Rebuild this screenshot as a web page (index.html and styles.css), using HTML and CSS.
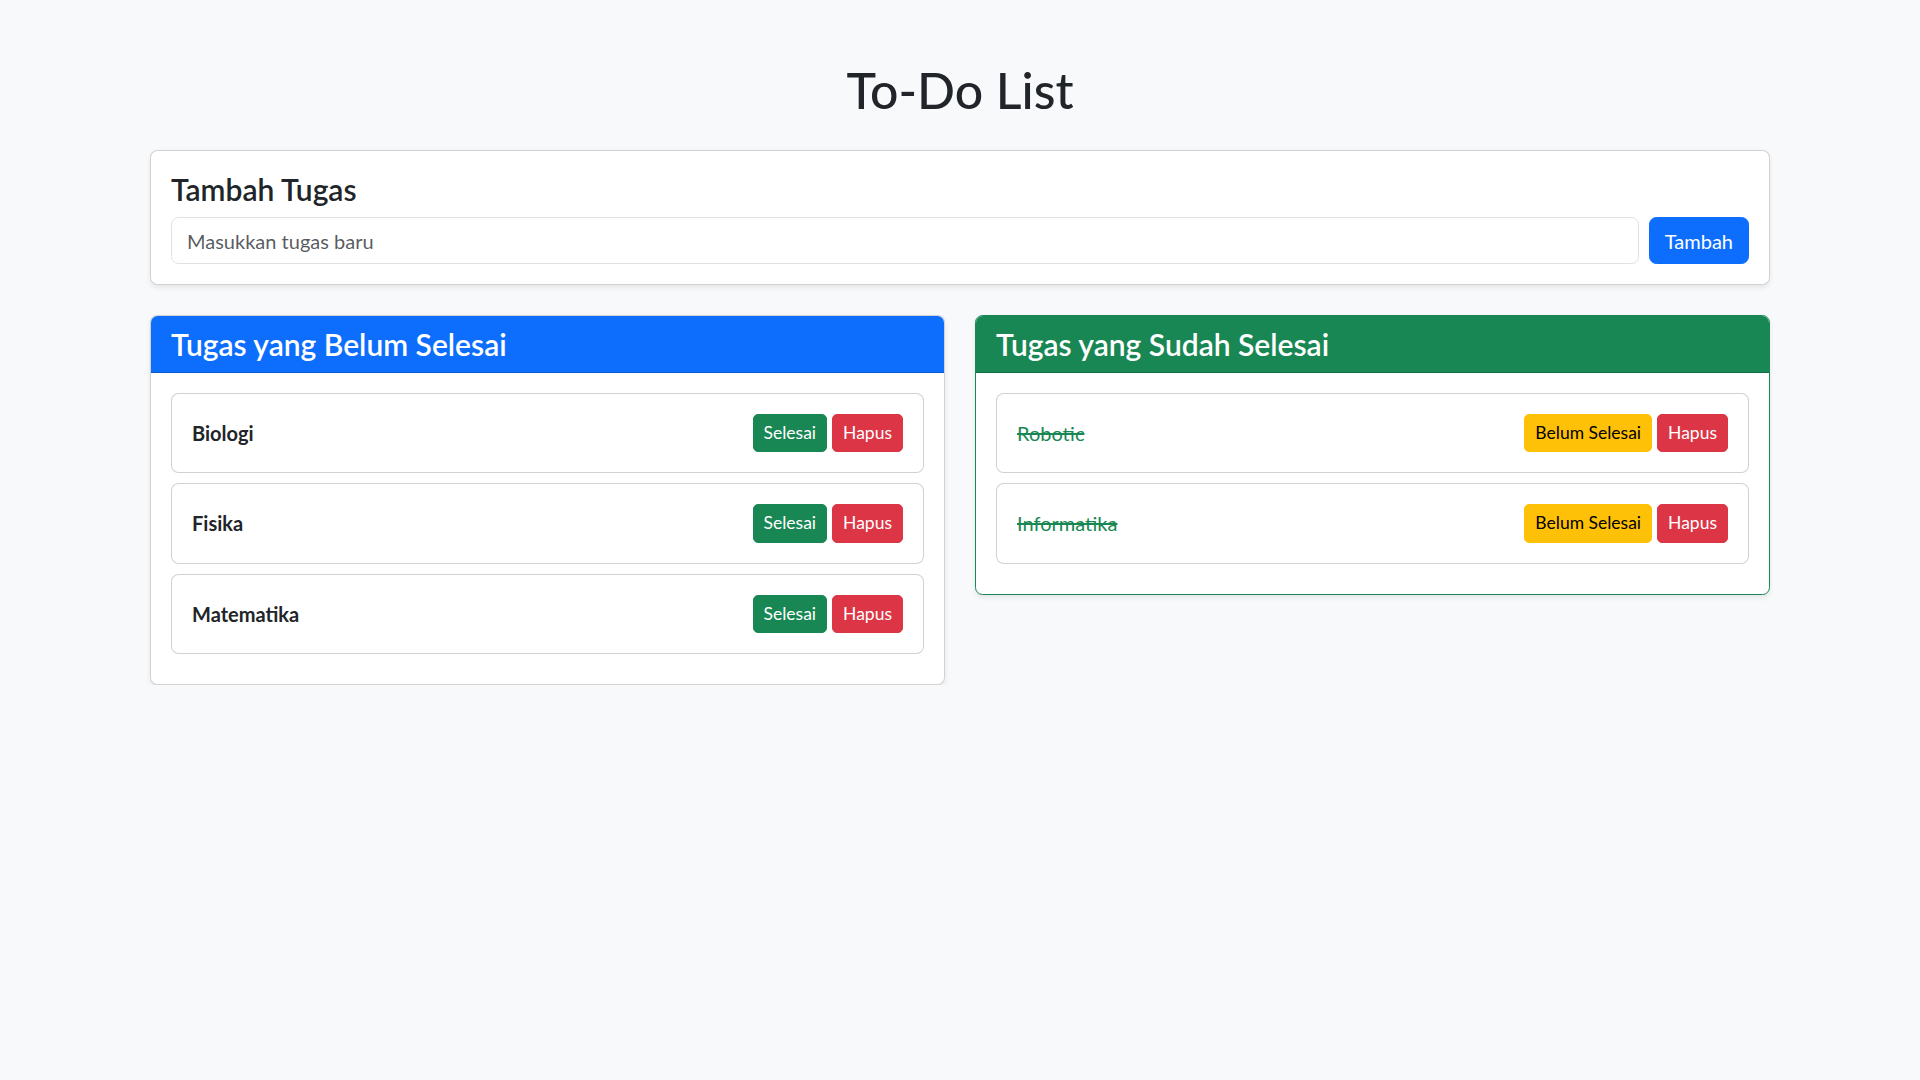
FILE: index.html
```html
<!DOCTYPE html>
<html lang="id">
<head>
<meta charset="utf-8">
<title>To-Do List</title>
<link rel="stylesheet" href="styles.css">
</head>
<body>
<div class="container">
  <h1 class="title">To-Do List</h1>

  <div class="card add-card">
    <div class="card-body">
      <h4 class="card-title">Tambah Tugas</h4>
      <form class="add-form">
        <input class="form-control" type="text" placeholder="Masukkan tugas baru">
        <button type="button" class="btn btn-primary">Tambah</button>
      </form>
    </div>
  </div>

  <div class="row">
    <div class="card">
      <div class="card-header header-primary">
        <h4 class="header-title">Tugas yang Belum Selesai</h4>
      </div>
      <div class="card-body">
        <div class="task">
          <span class="task-name">Biologi</span>
          <div class="actions">
            <button class="btn btn-sm btn-success">Selesai</button>
            <button class="btn btn-sm btn-danger">Hapus</button>
          </div>
        </div>
        <div class="task">
          <span class="task-name">Fisika</span>
          <div class="actions">
            <button class="btn btn-sm btn-success">Selesai</button>
            <button class="btn btn-sm btn-danger">Hapus</button>
          </div>
        </div>
        <div class="task">
          <span class="task-name">Matematika</span>
          <div class="actions">
            <button class="btn btn-sm btn-success">Selesai</button>
            <button class="btn btn-sm btn-danger">Hapus</button>
          </div>
        </div>
      </div>
    </div>

    <div class="card card-done">
      <div class="card-header header-success">
        <h4 class="header-title">Tugas yang Sudah Selesai</h4>
      </div>
      <div class="card-body">
        <div class="task">
          <span class="task-done">Robotic</span>
          <div class="actions">
            <button class="btn btn-sm btn-warning">Belum Selesai</button>
            <button class="btn btn-sm btn-danger">Hapus</button>
          </div>
        </div>
        <div class="task">
          <span class="task-done">Informatika</span>
          <div class="actions">
            <button class="btn btn-sm btn-warning">Belum Selesai</button>
            <button class="btn btn-sm btn-danger">Hapus</button>
          </div>
        </div>
      </div>
    </div>
  </div>
</div>
</body>
</html>
```
FILE: styles.css
```css
* { box-sizing: border-box; }

body {
  margin: 0;
  background: #f8f9fa;
  color: #212529;
  font-family: Lato, "Noto Sans", sans-serif;
  font-size: 20px;
  line-height: 1.5;
}

.container {
  width: 1620px;
  margin: 60px auto 0;
}

.title {
  margin: 0 0 30px;
  font-size: 50px;
  font-weight: 500;
  line-height: 1.2;
  text-align: center;
}

.card {
  background: #fff;
  border: 1px solid rgba(0, 0, 0, 0.175);
  border-radius: 7.5px;
  box-shadow: 0 2.5px 5px rgba(0, 0, 0, 0.075);
}

.add-card { margin-bottom: 30px; }

.card-body { padding: 20px; }

.card-title {
  margin: 0 0 10px;
  font-size: 30px;
  font-weight: 600;
  line-height: 1.2;
}

.add-form {
  display: flex;
  gap: 10px;
}

.form-control {
  flex: 1;
  height: 47px;
  padding: 7.5px 15px;
  font: inherit;
  color: #212529;
  border: 1px solid #dee2e6;
  border-radius: 7.5px;
  background: #fff;
}
.form-control::placeholder { color: rgba(33, 37, 41, 0.75); }

.btn {
  font: inherit;
  border: 1px solid transparent;
  border-radius: 7.5px;
  padding: 7.5px 15px;
  line-height: 1.5;
  cursor: pointer;
}

.btn-sm {
  font-size: 17.5px;
  padding: 5px 10px;
  border-radius: 5px;
}

.btn-primary { background: #0d6efd; border-color: #0d6efd; color: #fff; }
.btn-success { background: #198754; border-color: #198754; color: #fff; }
.btn-danger { background: #dc3545; border-color: #dc3545; color: #fff; }
.btn-warning { background: #ffc107; border-color: #ffc107; color: #000; }

.row {
  display: grid;
  grid-template-columns: 1fr 1fr;
  gap: 30px;
  align-items: start;
}

.card-header {
  padding: 10px 20px;
  border-bottom: 1px solid rgba(0, 0, 0, 0.175);
  border-radius: 6.5px 6.5px 0 0;
  color: #fff;
}
.header-primary { background: #0d6efd; }
.header-success { background: #198754; }

.card-done { border-color: #198754; }

.header-title {
  margin: 0;
  font-size: 30px;
  font-weight: 600;
  line-height: 1.2;
}

.task {
  display: flex;
  justify-content: space-between;
  align-items: center;
  padding: 20px;
  margin-bottom: 10px;
  border: 1px solid rgba(0, 0, 0, 0.175);
  border-radius: 7.5px;
  background: #fff;
}

.task-name { font-weight: 700; }

.task-done {
  color: #198754;
  text-decoration: line-through;
}

.actions {
  display: flex;
  gap: 5px;
}
```
